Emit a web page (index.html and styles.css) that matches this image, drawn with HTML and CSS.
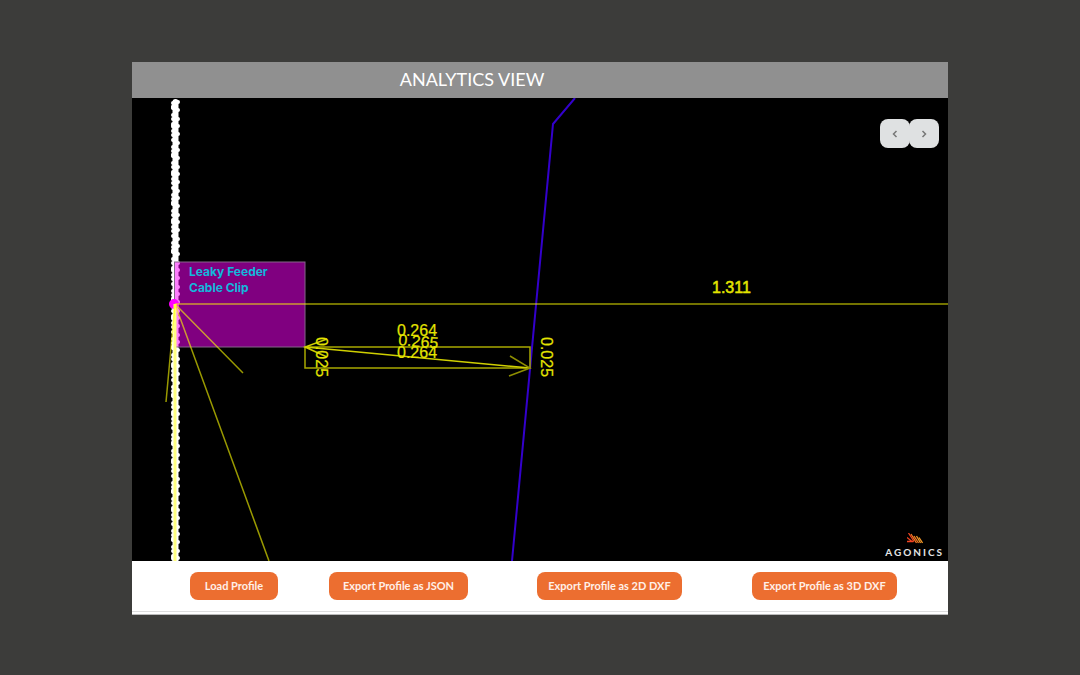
FILE: index.html
```html
<!DOCTYPE html>
<html lang="en">
<head>
<meta charset="utf-8">
<meta name="viewport" content="width=device-width, initial-scale=1">
<title>Analytics View</title>
<link rel="stylesheet" href="styles.css">
</head>
<body>
<main class="panel">
  <header class="panel-header"><h1 class="title">ANALYTICS VIEW</h1></header>
  <section class="viewer">
    <svg class="profile" viewBox="0 0 816 463" role="img" aria-label="Profile measurements">
      <g class="cable">
        <path class="core" d="M43.5 4V463"/>
        <path class="beads-a" d="M41 5V463"/>
        <path class="beads-b" d="M46 4V463"/>
        <path class="beads-c" d="M42 9V463"/>
      </g>
      <path class="wall" d="M443 0L421 26L380 463"/>
      <rect class="clip" x="42.500" y="164" width="130.500" height="85"/>
      <circle class="origin" cx="42" cy="206" r="5"/>
      <path class="axis" d="M43 206V463"/>
      <path class="ray" d="M43 206H816M43 206L111 275M43 206L137 463M43 206L34 304"/>
      <path class="dimension" d="M173 249H398V270H173Z"/>
      <path class="arrow" d="M173 249L398 270M195 241L173 249L195 259"/>
      <path class="arrow arrow-end" d="M378 258L398 270L377 278"/>
      <g class="values">
        <text x="265" y="238">0.264</text>
        <text transform="translate(266 247) rotate(5)">0.265</text>
        <text x="265" y="260">0.264</text>
        <text transform="translate(184 239) rotate(90)">0.025</text>
        <text transform="translate(409 239) rotate(90)">0.025</text>
        <text class="distance" x="580" y="195">1.311</text>
      </g>
      <g class="clip-label">
        <text x="57" y="178">Leaky Feeder</text>
        <text x="57" y="194">Cable Clip</text>
      </g>
    </svg>
    <nav class="pager" aria-label="Profiles">
      <button class="page-button" type="button" aria-label="Previous profile"><svg class="chevron" viewBox="0 0 8 8"><path d="M5.500 1L2.500 4L5.500 7"/></svg></button>
      <button class="page-button" type="button" aria-label="Next profile"><svg class="chevron" viewBox="0 0 8 8"><path d="M2.500 1L5.500 4L2.500 7"/></svg></button>
    </nav>
    <div class="brand">
      <svg class="brand-mark" viewBox="0 0 16 11">
        <path class="mark-red" d="M1.500 0L7 8.500M0 8.500H6.500M0 4.500L5 8.500"/>
        <path class="mark-orange" d="M4 1L9.500 10M7 3L11.500 10"/>
        <path class="mark-amber" d="M9.500 3L13.500 10M12 4.500L15.500 10"/>
      </svg>
      <span class="brand-name">AGONICS</span>
    </div>
  </section>
  <footer class="actions">
    <button class="action action-load" type="button">Load Profile</button>
    <button class="action action-json" type="button">Export Profile as JSON</button>
    <button class="action action-dxf" type="button">Export Profile as 2D DXF</button>
    <button class="action action-dxf" type="button">Export Profile as 3D DXF</button>
  </footer>
</main>
</body>
</html>
```
FILE: styles.css
```css
* { box-sizing: border-box; }
body {
  margin: 0;
  padding: 62px 132px 60px;
  background: #3c3c3a;
  font-family: Lato, sans-serif;
}
.panel { background: #fff; }
.panel-header {
  padding: 5px 136px 7px 0;
  background: #909090;
  text-align: center;
}
.title {
  margin: 0;
  color: #fff;
  font-size: 18px;
  font-weight: 400;
  line-height: 24px;
}
.viewer { position: relative; background: #000; }
.profile { display: block; width: 100%; height: auto; }
.profile path { fill: none; }
.cable { stroke: #fff; stroke-linecap: round; }
.core { stroke-width: 6; }
.beads-a { stroke-width: 4; stroke-dasharray: 0 5 0 7 0 4; }
.beads-b { stroke-width: 4; stroke-dasharray: 0 8 0 9 0 7; }
.beads-c { stroke-width: 6; stroke-dasharray: 0 19 0 29; }
.wall { stroke: #3300cc; stroke-width: 2; }
.clip { fill: rgba(255, 0, 255, .5); stroke: #85658a; stroke-width: 1; }
.origin { fill: #f0f; }
.axis { stroke: #ffff80; stroke-width: 3; }
.ray { stroke: rgba(255, 255, 0, .6); stroke-width: 1.500; }
.dimension { stroke: #a8a800; stroke-width: 1.500; }
.arrow { stroke: #d0d000; stroke-width: 1.500; }
.arrow-end { stroke: #8e8e00; }
.values { fill: #e4e400; stroke: #e4e400; stroke-width: .2; font: 16px "Liberation Sans", Arial, sans-serif; }
.distance { stroke-width: .5; }
.clip-label { fill: #12b8dc; font: 700 12px Inter, sans-serif; }
.pager { position: absolute; top: 21px; right: 9px; display: flex; }
.page-button {
  display: grid;
  place-items: center;
  width: 30px;
  height: 29px;
  margin: 0 0 0 -1px;
  padding: 0;
  border: 0;
  border-radius: 8px;
  background: #dfe1e2;
}
.chevron { width: 8px; height: 8px; fill: none; stroke: #777; stroke-width: 1.500; }
.brand {
  position: absolute;
  right: 4px;
  bottom: 3px;
  display: grid;
  justify-items: center;
  gap: 2px;
}
.brand-mark { width: 16px; height: 11px; fill: none; stroke-width: 1.300; }
.mark-red { stroke: #f04422; }
.mark-orange { stroke: #f47b22; }
.mark-amber { stroke: #f59a28; }
.brand-name {
  color: #e5e5e5;
  font-size: 10px;
  font-weight: 700;
  line-height: 12px;
  letter-spacing: 2px;
}
.actions {
  display: grid;
  grid-template-columns: 139fr 208fr 215fr 196fr;
  justify-items: start;
  padding: 11px 0 14px 58px;
  background: linear-gradient(#ddd, #ddd) 0 calc(100% - 2px) / 100% 1px no-repeat, #fff;
  border-bottom: 1px solid #bbb;
}
.action {
  height: 28px;
  padding: 0 0 2px;
  border: 0;
  border-radius: 8px;
  background: #ec6e30;
  color: #fff0e8;
  font: 700 11px Lato, sans-serif;
  white-space: nowrap;
}
.action-load { width: 88px; }
.action-json { width: 139px; }
.action-dxf { width: 145px; }
```
